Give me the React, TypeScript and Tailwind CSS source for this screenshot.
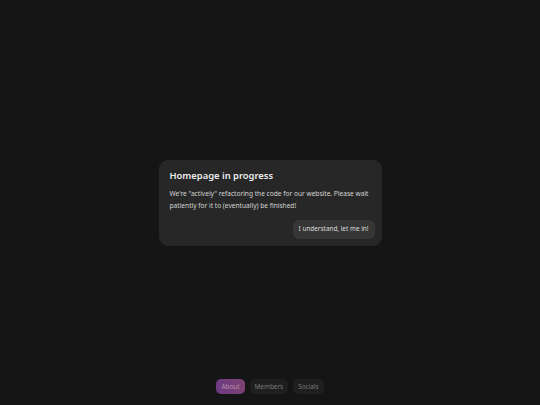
export default function App() {
  return (
    <div
      className="relative flex h-[405px] w-full items-center justify-center bg-[#151515]"
      style={{ fontFamily: "'Noto Sans', 'Open Sans', sans-serif" }}
    >
      <div className="w-[223px] rounded-[9px] bg-[#272727] px-[11px] pb-[7px] pt-[9px]">
        <h2 className="text-[9.4px] font-semibold leading-[14px] text-[#ececec]">Homepage in progress</h2>
        <p className="mt-[5px] text-[6.6px] leading-[12px] text-[#d4d4d4] antialiased">
          We're "actively" refactoring the code for our website. Please wait patiently for it to (eventually) be
          finished!
        </p>
        <div className="mt-[8px] flex justify-end">
          <button className="-mr-[4px] h-[19px] rounded-[6px] bg-[#363636] px-[6px] text-[6.4px] text-[#dcdcdc] antialiased">
            I understand, let me in!
          </button>
        </div>
      </div>

      {/* Bottom nav */}
      <nav className="absolute bottom-[11px] left-0 right-0 flex justify-center gap-[5px] antialiased">
        <span className="flex h-[15px] items-center rounded-[5px] bg-gradient-to-r from-[#6e3a82] to-[#7c4272] px-[5px] text-[6.4px] text-[#b68fae]">
          About
        </span>
        <span className="flex h-[15px] items-center rounded-[5px] bg-[#1f1f1f] px-[5px] text-[6.4px] text-[#7a7a7a]">
          Members
        </span>
        <span className="flex h-[15px] items-center rounded-[5px] bg-[#1f1f1f] px-[5px] text-[6.4px] text-[#7a7a7a]">
          Socials
        </span>
      </nav>
    </div>
  );
}
